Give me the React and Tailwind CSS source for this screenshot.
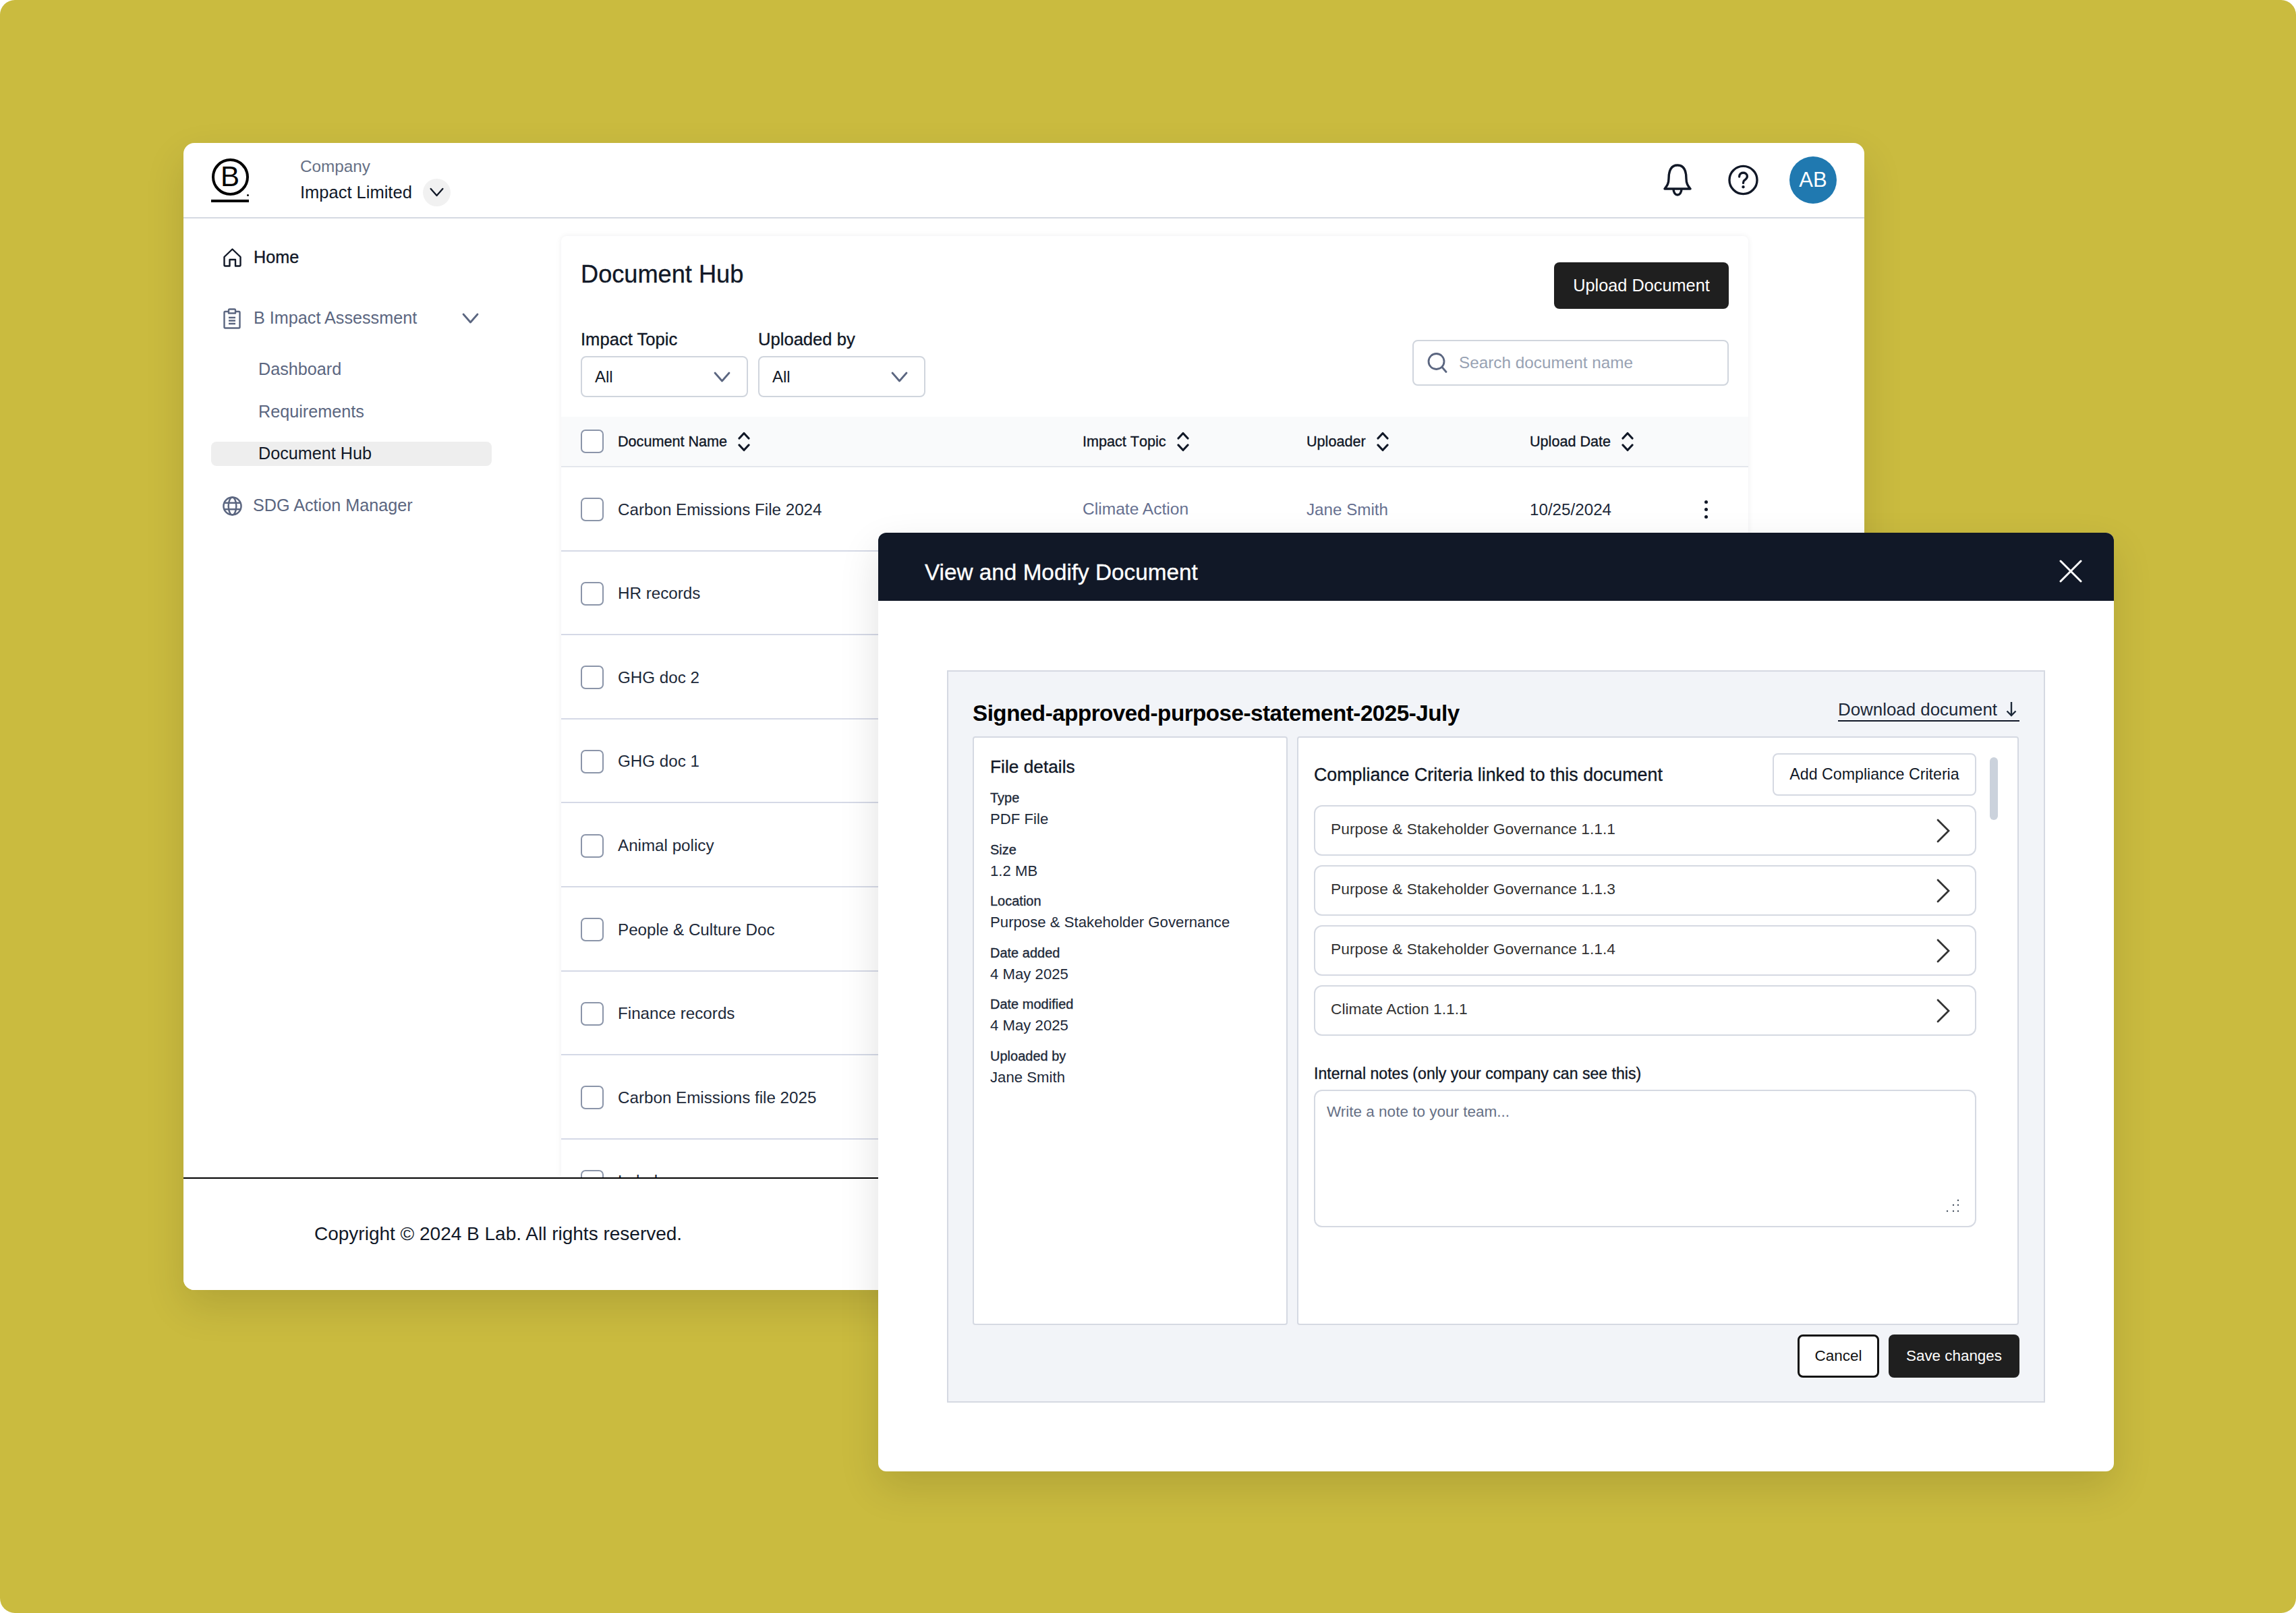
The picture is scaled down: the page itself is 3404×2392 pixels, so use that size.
import React from 'react';

const medium = '[-webkit-text-stroke:0.35px_currentColor]';

const rows = [
  { name: 'Carbon Emissions File 2024', topic: 'Climate Action', uploader: 'Jane Smith', date: '10/25/2024' },
  { name: 'HR records' },
  { name: 'GHG doc 2' },
  { name: 'GHG doc 1' },
  { name: 'Animal policy' },
  { name: 'People & Culture Doc' },
  { name: 'Finance records' },
  { name: 'Carbon Emissions file 2025' },
  { name: 'Labels' },
];

const fileDetails = [
  ['Type', 'PDF File'],
  ['Size', '1.2 MB'],
  ['Location', 'Purpose & Stakeholder Governance'],
  ['Date added', '4 May 2025'],
  ['Date modified', '4 May 2025'],
  ['Uploaded by', 'Jane Smith'],
];

const criteria = [
  'Purpose & Stakeholder Governance 1.1.1',
  'Purpose & Stakeholder Governance 1.1.3',
  'Purpose & Stakeholder Governance 1.1.4',
  'Climate Action 1.1.1',
];

const Chevron = ({ className = 'w-[25px] h-[16px] text-[#5b6680]' }) => (
  <svg viewBox="0 0 25 16" fill="none" className={className}>
    <path d="M2 2 L12.5 14 L23 2" stroke="currentColor" strokeWidth="2.8" strokeLinecap="round" strokeLinejoin="round" />
  </svg>
);

const SortIcon = () => (
  <svg viewBox="0 0 18 30" fill="none" className="w-[18px] h-[30px] shrink-0">
    <path d="M2 10 L9 2.5 L16 10 M2 20 L9 27.5 L16 20" stroke="#111827" strokeWidth="3.2" strokeLinecap="round" strokeLinejoin="round" />
  </svg>
);

const Checkbox = () => (
  <span className="block w-[34px] h-[35px] shrink-0 rounded-[7px] border-2 border-[#8b95a9] bg-white" />
);

const Logo = () => (
  <div className="relative flex flex-col items-center w-[56px] shrink-0">
    <div className="w-[55px] h-[55px] rounded-full border-[4px] border-black flex items-center justify-center text-[42px] leading-none text-black">
      B
    </div>
    <div className="w-[56px] h-[4px] bg-black mt-[6px]" />
    <span className="absolute right-0 top-[53px] w-[3px] h-[3px] rounded-full bg-black" />
  </div>
);

const HomeIcon = () => (
  <svg viewBox="0 0 27 28" fill="none" className="w-[27px] h-[28px] shrink-0">
    <path d="M1.5 13 L13.5 1.5 L25.5 13 V25 Q25.5 26.5 24 26.5 H18 V17 H9.5 V26.5 H3 Q1.5 26.5 1.5 25 Z" stroke="#111827" strokeWidth="2.4" strokeLinejoin="round" />
  </svg>
);

const ClipboardIcon = () => (
  <svg viewBox="0 0 26 31" fill="none" className="w-[26px] h-[31px] shrink-0">
    <path d="M8 5 H3 Q1.5 5 1.5 6.5 V28 Q1.5 29.5 3 29.5 H23 Q24.5 29.5 24.5 28 V6.5 Q24.5 5 23 5 H18" stroke="#5b6680" strokeWidth="2.4" />
    <path d="M8 7.5 V3 Q8 1.5 9.5 1.5 H16.5 Q18 1.5 18 3 V7.5 Z" stroke="#5b6680" strokeWidth="2.4" strokeLinejoin="round" />
    <path d="M8 14 H18 M8 18.5 H18 M8 23 H18" stroke="#5b6680" strokeWidth="2.4" />
  </svg>
);

const GlobeIcon = () => (
  <svg viewBox="0 0 30 30" fill="none" className="w-[29px] h-[29px] shrink-0">
    <circle cx="15" cy="15" r="13.5" stroke="#5b6680" strokeWidth="2.6" />
    <ellipse cx="15" cy="15" rx="6" ry="13.5" stroke="#5b6680" strokeWidth="2.6" />
    <path d="M2.5 10 H27.5 M2.5 20 H27.5" stroke="#5b6680" strokeWidth="2.6" />
  </svg>
);

const BellIcon = () => (
  <svg viewBox="0 0 42 48" fill="none" className="w-[42px] h-[48px]">
    <path d="M8 22 C8 9 12 2 21 2 C30 2 34 9 34 22 C34 30 37 33 40 37 H2 C5 33 8 30 8 22 Z" stroke="#111827" strokeWidth="3.4" strokeLinejoin="round" />
    <path d="M15 37 C15 43 18 46 21 46 C24 46 27 43 27 37" stroke="#111827" strokeWidth="3.4" />
  </svg>
);

const HelpIcon = () => (
  <svg viewBox="0 0 46 46" fill="none" className="w-[45px] h-[46px]">
    <circle cx="23" cy="23" r="21" stroke="#111827" strokeWidth="3.4" />
    <path d="M17 18 C17 14 19.5 12 23 12 C26.5 12 29 14 29 17.5 C29 21 26.5 22 24.5 23.5 C23.3 24.5 23 25.5 23 27.5" stroke="#111827" strokeWidth="3.4" strokeLinecap="round" />
    <circle cx="23" cy="33.5" r="2.2" fill="#111827" />
  </svg>
);

const SearchIcon = () => (
  <svg viewBox="0 0 30 30" fill="none" className="w-[30px] h-[30px] shrink-0">
    <circle cx="13.5" cy="13" r="11.5" stroke="#5b6680" strokeWidth="2.8" />
    <path d="M22 21.5 L28 28.5" stroke="#5b6680" strokeWidth="2.8" strokeLinecap="round" />
  </svg>
);

const SortHeader = ({ label }) => (
  <div className={`flex items-center gap-[16px] text-[21.6px] leading-none text-[#111827] [font-kerning:none] ${medium}`}>
    <span>{label}</span>
    <SortIcon />
  </div>
);

const NavItem = ({ icon, active, className = '', children }) => (
  <div className={`flex items-center h-[36px] w-[416px] text-[25.2px] leading-none ${active ? 'bg-[#eeeeee] rounded-[8px] text-[#111827]' : ''} ${className}`}>
    {icon}
    {children}
  </div>
);

const Select = ({ label }) => (
  <div className="flex flex-col w-[248px]">
    <div className={`-mt-[1px] text-[25.6px] leading-[25px] text-[#111827] ${medium}`}>{label}</div>
    <div className="mt-[12px] h-[61px] rounded-[8px] border-2 border-[#d0d5dd] flex items-center justify-between pl-[19px] pr-[24px] text-[24px] text-[#111827]">
      <span>All</span>
      <Chevron />
    </div>
  </div>
);

const AppWindow = () => (
  <div className="absolute left-[272px] top-[212px] w-[2492px] h-[1701px] bg-white rounded-[16px] overflow-hidden flex flex-col shadow-[0_24px_60px_rgba(0,0,0,0.12)]">
    <header className="h-[112px] shrink-0 border-b-2 border-[#d5d9e2] flex items-center pl-[41px] pr-[41px]">
      <Logo />
      <div className="ml-[76px] flex flex-col">
        <div className="text-[24.3px] leading-[36px] text-[#667085]">Company</div>
        <div className="flex items-center text-[25.5px] leading-[38px] text-[#111827]">
          Impact Limited
          <span className="ml-[16px] w-[41px] h-[41px] rounded-full bg-[#f1f1f1] flex items-center justify-center">
            <Chevron className="w-[21px] h-[14px] text-[#111827]" />
          </span>
        </div>
      </div>
      <div className="ml-auto flex items-center">
        <BellIcon />
        <span className="ml-[54px]"><HelpIcon /></span>
        <div className="ml-[46px] w-[70px] h-[70px] rounded-full bg-[#2079b0] text-white text-[31px] flex items-center justify-center">AB</div>
      </div>
    </header>

    <div className="flex flex-1 min-h-0">
      <aside className="w-[560px] shrink-0 pl-[41px] pt-[40px] text-[#5b6680]">
        <NavItem icon={<span className="ml-[18px] mr-[18px]"><HomeIcon /></span>} className={`text-[#111827] ${medium}`}>Home</NavItem>
        <NavItem icon={<span className="ml-[18px] mr-[19px]"><ClipboardIcon /></span>} className="mt-[54px]">
          B Impact Assessment
          <span className="ml-[67px]"><Chevron /></span>
        </NavItem>
        <NavItem className="mt-[40px] pl-[70px]">Dashboard</NavItem>
        <NavItem className="mt-[27px] pl-[70px]">Requirements</NavItem>
        <NavItem active className="mt-[26px] pl-[70px]">Document Hub</NavItem>
        <NavItem icon={<span className="ml-[17px] mr-[16px]"><GlobeIcon /></span>} className="mt-[41px]">SDG Action Manager</NavItem>
      </aside>

      <main className="w-[1760px] mt-[26px] rounded-t-[8px] bg-white shadow-[0_0_8px_rgba(16,24,40,0.07)] overflow-hidden">
        <div className="flex items-start justify-between pt-[39px] px-[29px]">
          <h1 className={`text-[36.2px] leading-[36px] text-[#111827] ${medium}`}>Document Hub</h1>
          <button className="w-[259px] h-[69px] rounded-[8px] bg-[#1f1f1f] text-white text-[25.3px]">Upload Document</button>
        </div>
        <div className="mt-[34px] flex items-start justify-between px-[29px]">
          <div className="flex gap-[15px]">
            <Select label="Impact Topic" />
            <Select label="Uploaded by" />
          </div>
          <div className="mt-[12px] w-[469px] h-[68px] rounded-[8px] border-2 border-[#d0d5dd] flex items-center pl-[20px] gap-[17px] text-[24.3px] text-[#98a2b3]">
            <SearchIcon />
            <span>Search document name</span>
          </div>
        </div>

        <div className="mt-[29px] h-[75px] bg-[#f9fafb] border-b-2 border-[#e4e7ec] pl-[29px] grid grid-cols-[744px_332px_331px_1fr] items-center">
          <div className="flex items-center gap-[21px]">
            <Checkbox />
            <SortHeader label="Document Name" />
          </div>
          <SortHeader label="Impact Topic" />
          <SortHeader label="Uploader" />
          <SortHeader label="Upload Date" />
        </div>

        {rows.map((row) => (
          <div key={row.name} className="h-[124.6px] pt-[3px] border-b-2 border-[#d5d9e6] pl-[29px] grid grid-cols-[744px_332px_331px_1fr] items-center text-[24.2px] text-[#1d2939]">
            <div className="flex items-center gap-[21px]">
              <Checkbox />
              <span>{row.name}</span>
            </div>
            <span className="text-[#667090] text-[24.6px]">{row.topic}</span>
            <span className="text-[#667090]">{row.uploader}</span>
            {row.date && (
              <div className="flex items-center">
                <span className="w-[259px]">{row.date}</span>
                <span className="flex flex-col gap-[6px]">
                  <i className="block w-[5px] h-[5px] rounded-full bg-[#111827]" />
                  <i className="block w-[5px] h-[5px] rounded-full bg-[#111827]" />
                  <i className="block w-[5px] h-[5px] rounded-full bg-[#111827]" />
                </span>
              </div>
            )}
          </div>
        ))}
      </main>
    </div>

    <footer className="h-[167px] shrink-0 border-t-2 border-black bg-white pl-[194px] pt-[66px] text-[28px] leading-[32px] text-[#111827]">
      Copyright © 2024 B Lab. All rights reserved.
    </footer>
  </div>
);

const DocumentModal = () => (
  <div className="absolute left-[1302px] top-[790px] w-[1832px] h-[1392px] bg-white rounded-[12px] overflow-hidden flex flex-col shadow-[0_24px_60px_rgba(0,0,0,0.12)]">
    <div className="h-[101px] shrink-0 bg-[#111827] flex items-center justify-between pl-[69px] pr-[47px]">
      <h2 className={`pt-[16px] text-[33.3px] text-white ${medium}`}>View and Modify Document</h2>
      <svg viewBox="0 0 34 34" fill="none" className="w-[34px] h-[34px] mt-[12px]">
        <path d="M2 2 L32 32 M32 2 L2 32" stroke="white" strokeWidth="3" strokeLinecap="round" />
      </svg>
    </div>

    <div className="ml-[102px] mt-[103px] w-[1628px] h-[1086px] border-2 border-[#d5d9e2] bg-[#f2f4f8] px-[36px] flex flex-col">
      <div className="h-[96px] shrink-0 flex justify-between">
        <h3 className="mt-[44px] text-[33.2px] leading-[36px] font-bold tracking-[-0.5px] text-black">Signed-approved-purpose-statement-2025-July</h3>
        <div className="mt-[31px] h-[43px] pt-[11px] pr-[4px] border-b-2 border-[#111827] flex items-start text-[25.9px] leading-[28px] text-[#1d2939]">
          Download document
          <svg viewBox="0 0 16 24" fill="none" className="w-[16px] h-[24px] mt-[1px] ml-[13px]">
            <path d="M8 2 V22 M1.5 15.5 L8 22 L14.5 15.5" stroke="#1d2939" strokeWidth="2.4" />
          </svg>
        </div>
      </div>

      <div className="flex gap-[14px] h-[873px] shrink-0">
        <section className="w-[467px] rounded-[4px] border-2 border-[#d5d9e2] bg-white pl-[24px] pt-[27px]">
          <div className={`text-[26.3px] leading-[32px] text-[#111827] ${medium}`}>File details</div>
          <div className="mt-[14px] flex flex-col gap-[12.5px]">
            {fileDetails.map(([label, value]) => (
              <div key={label}>
                <div className={`text-[20px] leading-[32px] text-[#1d2939] ${medium}`}>{label}</div>
                <div className="text-[22.2px] leading-[32px] text-[#1d2939]">{value}</div>
              </div>
            ))}
          </div>
        </section>

        <section className="relative w-[1070px] rounded-[4px] border-2 border-[#d5d9e2] bg-white pl-[23px] pt-[23px]">
          <div className="w-[982px]">
            <div className="flex items-center justify-between">
              <div className={`pt-[1px] text-[26.8px] text-[#111827] ${medium}`}>Compliance Criteria linked to this document</div>
              <button className="w-[302px] h-[63px] rounded-[8px] border-2 border-[#d5d9e2] text-[23.2px] text-[#111827]">Add Compliance Criteria</button>
            </div>
            <div className="mt-[14px] flex flex-col gap-[14px]">
              {criteria.map((item) => (
                <div key={item} className="h-[75px] rounded-[12px] border-2 border-[#d5d9e2] flex items-center justify-between pl-[23px] pr-[37px] text-[22.8px] text-[#333333]">
                  <span className="pb-[5px]">{item}</span>
                  <svg viewBox="0 0 20 36" fill="none" className="w-[20px] h-[36px]">
                    <path d="M2 2 L18 18 L2 34" stroke="#333333" strokeWidth="2.8" strokeLinecap="round" />
                  </svg>
                </div>
              ))}
            </div>
            <div className={`mt-[42px] text-[23.1px] leading-[28px] text-[#111827] ${medium}`}>Internal notes (only your company can see this)</div>
            <div className="relative mt-[10px] h-[204px] rounded-[12px] border-2 border-[#d5d9e2] pl-[17px] pt-[16px] text-[22.5px] leading-[30px] text-[#667085]">
              Write a note to your team...
              <svg viewBox="0 0 20 20" fill="#4b5563" className="absolute right-[23px] bottom-[20px] w-[20px] h-[20px]">
                <circle cx="18" cy="2" r="1.2" />
                <circle cx="11" cy="9" r="1.2" />
                <circle cx="18" cy="9" r="1.2" />
                <circle cx="2" cy="18" r="1.2" />
                <circle cx="11" cy="18" r="1.2" />
                <circle cx="18" cy="18" r="1.2" />
              </svg>
            </div>
          </div>
          {/* scrollbar thumb */}
          <div className="absolute left-[1025px] top-[29px] w-[12px] h-[93px] rounded-full bg-[#cbd2dc]" />
        </section>
      </div>

      <div className="mt-[14px] flex justify-end gap-[14px]">
        <button className="w-[121px] h-[64px] rounded-[8px] border-[3px] border-[#111111] bg-white text-[22.5px] text-[#111111]">Cancel</button>
        <button className="w-[194px] h-[64px] rounded-[8px] bg-[#1f1f1f] text-white text-[22.4px]">Save changes</button>
      </div>
    </div>
  </div>
);

const App = () => {
  return (
    <div className="bg-white">
      <div className="relative w-[3404px] h-[2392px] overflow-hidden rounded-[22px] bg-[#cabb3f] font-['Liberation_Sans',Arial,sans-serif]">
        <AppWindow />
        <DocumentModal />
      </div>
    </div>
  );
};

export default App;
